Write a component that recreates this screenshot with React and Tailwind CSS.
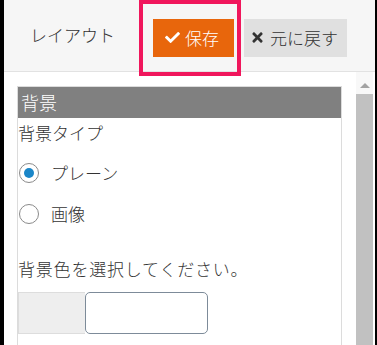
import React from 'react';
import { FaCheck, FaTimes } from 'react-icons/fa';

const font = { fontFamily: '"Noto Sans CJK JP", "Noto Sans", sans-serif' };

function Radio({ checked, label }) {
    return (
        <div className="flex items-center h-[41px]">
            <span className="w-[20px] h-[20px] rounded-full border border-[#8a8a8a] bg-white flex items-center justify-center ml-[1px]">
                {checked ? <span className="w-[10px] h-[10px] rounded-full bg-[#1a86c8]" /> : null}
            </span>
            <span className="ml-[12px] text-[17px] text-[#333]">{label}</span>
        </div>
    );
}

export default function App() {
    return (
        <div className="w-[377px] h-[345px] bg-black pl-[4px] pr-[2px] overflow-hidden font-light" style={font}>
            <div className="relative h-full flex flex-col bg-white">
                <div className="h-[72px] shrink-0 bg-[#f6f6f6] border-b border-[#e2e2e2] flex items-center">
                    <span className="ml-[26px] text-[17px] text-[#333] mr-[38px] mt-[-2px]">レイアウト</span>
                    <button className="h-[38px] w-[81px] bg-[#e8660c] text-white flex items-center pl-[12px] gap-[5px] text-[17px] mt-[4px]">
                        <FaCheck size={15} />
                        <span>保存</span>
                    </button>
                    <button className="h-[38px] w-[103px] ml-[10px] bg-[#e0e0e0] text-[#333] flex items-center pl-[6px] gap-[5px] text-[17px] mt-[4px]">
                        <FaTimes size={15} />
                        <span>元に戻す</span>
                    </button>
                </div>
                <div className="absolute left-[135px] top-0 w-[102px] h-[76px] border-[4px] border-[#f0165c]" />
                <div className="flex flex-1 min-h-0">
                    <div className="flex-1 pl-[13px] pt-[14px] pr-[14px]">
                        <div className="border border-[#dcdcdc] border-b-0 h-[300px]">
                            <div className="h-[31px] bg-[#808080] text-white text-[18px] leading-[31px] pl-[3px]">背景</div>
                            <div className="h-[30px] leading-[30px] text-[17px] text-[#333]">背景タイプ</div>
                            <div className="mt-[4px]">
                                <Radio checked label="プレーン" />
                                <Radio label="画像" />
                            </div>
                            <div className="mt-[20px] h-[30px] leading-[30px] text-[17px] text-[#333] tracking-[0.8px]">背景色を選択してください。</div>
                            <div className="mt-[8px] flex h-[42px]">
                                <div className="w-[67px] bg-[#eeeeee] border border-[#dddddd] border-r-0" />
                                <div className="w-[123px] rounded-[5px] border border-[#7d8b99] bg-white" />
                            </div>
                        </div>
                    </div>
                    <div className="w-[17px] bg-[#f8f8f8] flex flex-col items-center mr-[2px]">
                        <div className="mt-[11px] w-0 h-0 border-l-[5px] border-r-[5px] border-b-[5px] border-l-transparent border-r-transparent border-b-[#a3a3a3]" />
                        <div className="mt-[6px] w-full flex-1 bg-[#c1c1c1]" />
                    </div>
                </div>
            </div>
        </div>
    );
}
